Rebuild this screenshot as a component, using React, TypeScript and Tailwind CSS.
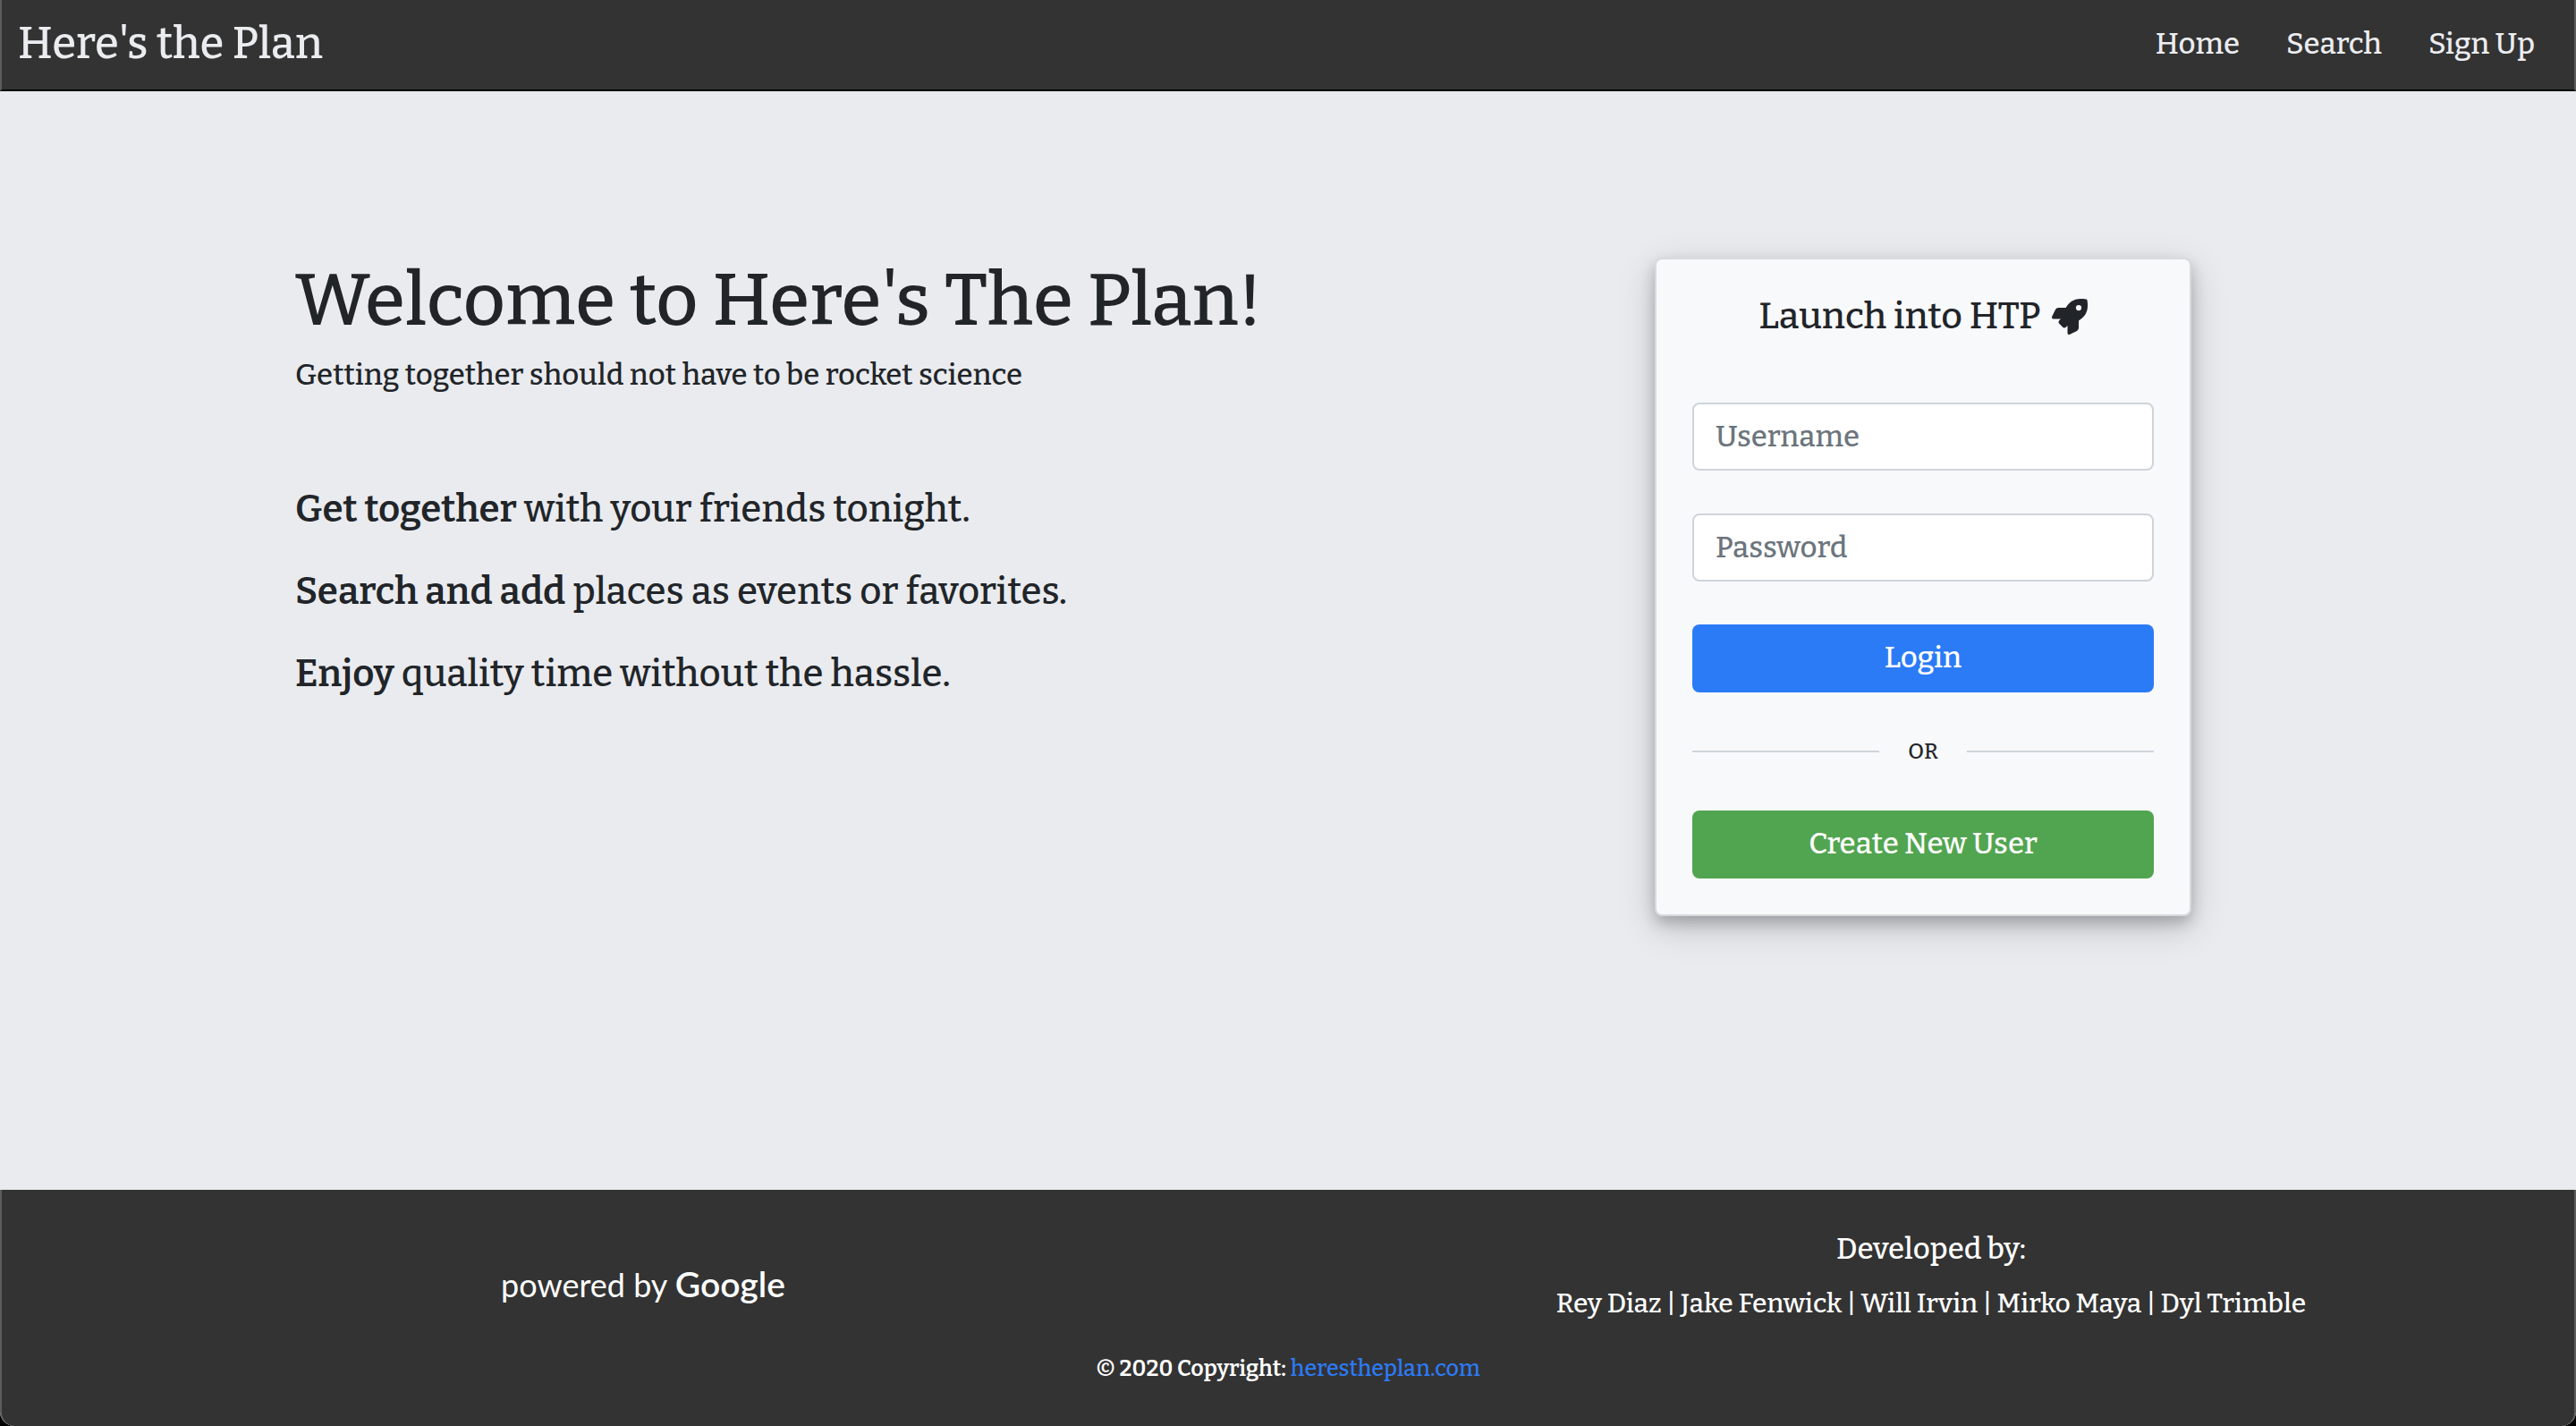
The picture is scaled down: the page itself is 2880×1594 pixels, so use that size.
import { FaRocket } from "react-icons/fa";

const navLinks = ["Home", "Search", "Sign Up"];

const features = [
  { lead: "Get together", rest: "with your friends tonight." },
  { lead: "Search and add", rest: "places as events or favorites." },
  { lead: "Enjoy", rest: "quality time without the hassle." },
];

const developers = ["Rey Diaz", "Jake Fenwick", "Will Irvin", "Mirko Maya", "Dyl Trimble"];

function Header() {
  return (
    <header className="flex h-[102px] items-center justify-between border-x-2 border-b-2 border-x-[#5c5c5c] border-b-black bg-[#333333] pr-[44px] pb-0.5 pl-[18px] text-[#ebecf0]">
      <a href="#" className="text-[49px] leading-[72px]">
        Here's the Plan
      </a>
      <nav className="flex gap-[52px] text-[33px] leading-[48px]">
        {navLinks.map((label) => (
          <a key={label} href="#">
            {label}
          </a>
        ))}
      </nav>
    </header>
  );
}

function Welcome() {
  return (
    <section className="flex-1">
      <h1 className="text-[82px] leading-[95px]">Welcome to Here's The Plan!</h1>
      <p className="mt-3 text-[33px] leading-[48px]">
        Getting together should not have to be rocket science
      </p>
      <div className="mt-24 flex flex-col gap-8 text-[42px] leading-[60px]">
        {features.map(({ lead, rest }) => (
          <p key={lead}>
            <strong className="font-semibold">{lead}</strong> {rest}
          </p>
        ))}
      </div>
    </section>
  );
}

const inputClass =
  "h-[76px] w-full rounded-lg border-2 border-[#ced4da] bg-white px-6 text-[33px] leading-[48px] placeholder:text-[#6c757d] placeholder:opacity-100";
const buttonClass = "h-[76px] w-full rounded-lg pb-0.5 text-[33px] leading-[48px] text-white";

function LoginCard() {
  return (
    <form className="w-[600px] shrink-0 rounded-lg border-2 border-[#d9dadc] bg-[#f8f9fb] p-10 shadow-[0_8px_16px_0_rgba(0,0,0,0.2),0_12px_40px_0_rgba(0,0,0,0.19)]">
      <h2 className="flex items-center justify-center gap-3 text-[41px] leading-[48px]">
        Launch into HTP <FaRocket className="size-10" aria-hidden="true" />
      </h2>
      <div className="mt-[72px] flex flex-col gap-12">
        <input type="text" aria-label="Username" placeholder="Username" className={inputClass} />
        <input type="password" aria-label="Password" placeholder="Password" className={inputClass} />
        <button type="button" className={`${buttonClass} bg-[#2c7bf6]`}>
          Login
        </button>
        <div className="flex items-center gap-8 text-[24px] leading-[36px]">
          <span className="h-0.5 flex-1 bg-[#ced4da]" />
          OR
          <span className="h-0.5 flex-1 bg-[#ced4da]" />
        </div>
        <button type="button" className={`${buttonClass} bg-[#52a550]`}>
          Create New User
        </button>
      </div>
    </form>
  );
}

function Footer() {
  return (
    <footer className="rounded-b-[16px] border-x-2 border-[#5c5c5c] bg-[#333333] pt-[42px] pb-[46px] text-white">
      <div className="grid grid-cols-2 items-center text-center">
        <p className="mt-5 pr-1 font-['Lato',sans-serif] text-[36px] leading-[48px] font-normal">
          powered by <span className="text-[39px] font-semibold">Google</span>
        </p>
        <div>
          <h3 className="text-[33px] leading-[48px]">Developed by:</h3>
          <p className="mt-4 text-[30px] leading-[42px]">{developers.join(" | ")}</p>
        </div>
      </div>
      <p className="mt-[34px] text-center text-[25px] leading-[36px]">
        <span className="font-semibold">© 2020 Copyright:</span>{" "}
        <a href="#" className="text-[#2c7bf6]">
          herestheplan.com
        </a>
      </p>
    </footer>
  );
}

export default function App() {
  return (
    <div className="bg-black">
      <div className="flex min-h-screen flex-col rounded-b-[16px] bg-[#eaebef] font-['Bitter','DejaVu_Serif_Condensed',serif] font-medium text-[#212529]">
        <Header />
        <main className="mx-auto flex w-full max-w-[2280px] flex-1 items-start pt-[186px] pr-[130px] pb-24 pl-[30px]">
          <Welcome />
          <LoginCard />
        </main>
        <Footer />
      </div>
    </div>
  );
}
